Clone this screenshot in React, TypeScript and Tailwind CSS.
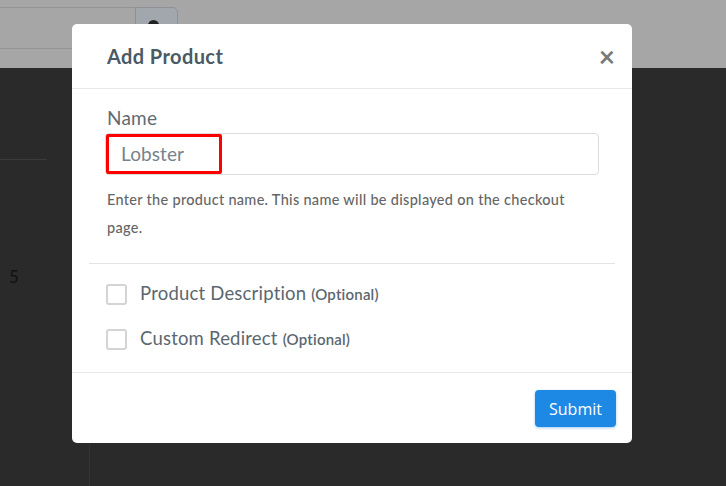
import { useState } from "react";

function Checkbox({ label }: { label: string }) {
  return (
    <label className="flex h-[27px] items-center gap-[13px]">
      <span className="mt-[2px] h-[21px] w-[21px] rounded-[3px] border-2 border-[#d4d4d4] bg-white" />
      <span className="text-[18.5px] leading-[27px] tracking-[0.2px] text-[#5b6770]">
        {label}{" "}
        <span className="text-[15px] font-semibold">(Optional)</span>
      </span>
    </label>
  );
}

export default function App() {
  const [name] = useState("Lobster");

  return (
    <div className="relative h-[486px] w-[726px] overflow-hidden bg-[#2a2a2a] font-['Lato','Liberation_Sans',sans-serif]">
      {/* dimmed page behind the modal */}
      <div className="h-[68px] bg-[#a6a6a6] pt-[7px]">
        <div className="flex h-[42px]">
          <div className="w-[135px] border-y border-[#949494]" />
          <div className="relative w-[43px] rounded-tr-[5px] border border-[#8e9296] bg-[#a2a7ad]">
            <span className="absolute left-[12px] top-[12px] h-[11px] w-[11px] rounded-full bg-[#222]" />
          </div>
        </div>
      </div>
      <div className="mt-[91px] h-px w-[47px] bg-[#3a3a3a]" />
      <p className="ml-[9px] mt-[104px] text-[17px] text-[#111]">5</p>
      <div className="absolute bottom-0 left-[89px] top-[443px] w-px bg-[#333]" />

      {/* modal */}
      <div className="absolute left-[72px] top-[24px] w-[560px] rounded-[5px] bg-white">
        <div className="flex h-[65px] items-center justify-between border-b border-[#e8e8e8] pl-[35px] pr-[17px]">
          <h1 className="text-[20px] font-bold tracking-[0.4px] text-[#4b5a64]">Add Product</h1>
          <span className="text-[28px] font-bold leading-none text-[#7a7a7a]">×</span>
        </div>

        <div className="px-[33px] pt-[17px]">
          <p className="ml-[2px] text-[19px] leading-[24px] tracking-[0.2px] text-[#5f6b73]">Name</p>
          <div className="relative mt-[3px] h-[42px] w-[494px] rounded-[4px] border border-[#dcdcdc]">
            <span className="absolute left-0 top-0 h-[40px] w-[116px] rounded-[2px] border-[3px] border-[#ff0000]" />
            <span className="absolute left-[15px] top-[7px] text-[19px] leading-[26px] tracking-[0.1px] text-[#76838c]">
              {name}
            </span>
          </div>
          <p className="ml-[2px] mt-[11px] max-w-[480px] text-[14.5px] font-medium leading-[28px] tracking-[0.3px] text-[#666]">
            Enter the product name. This name will be displayed on the checkout page.
          </p>
        </div>

        <div className="mx-[17px] mt-[21px] border-t border-[#e3e3e3]" />

        <div className="flex flex-col gap-[18px] px-[34px] pb-[20px] pt-[16px]">
          <Checkbox label="Product Description" />
          <Checkbox label="Custom Redirect" />
        </div>

        <div className="flex justify-end border-t border-[#e8e8e8] pb-[16px] pr-[16px] pt-[17px]">
          <button className="h-[37px] w-[81px] rounded-[4px] bg-[#1e88e5] font-['Open_Sans',sans-serif] text-[16px] text-white shadow-[0_1px_3px_rgba(30,136,229,0.4)]">
            Submit
          </button>
        </div>
      </div>
    </div>
  );
}
